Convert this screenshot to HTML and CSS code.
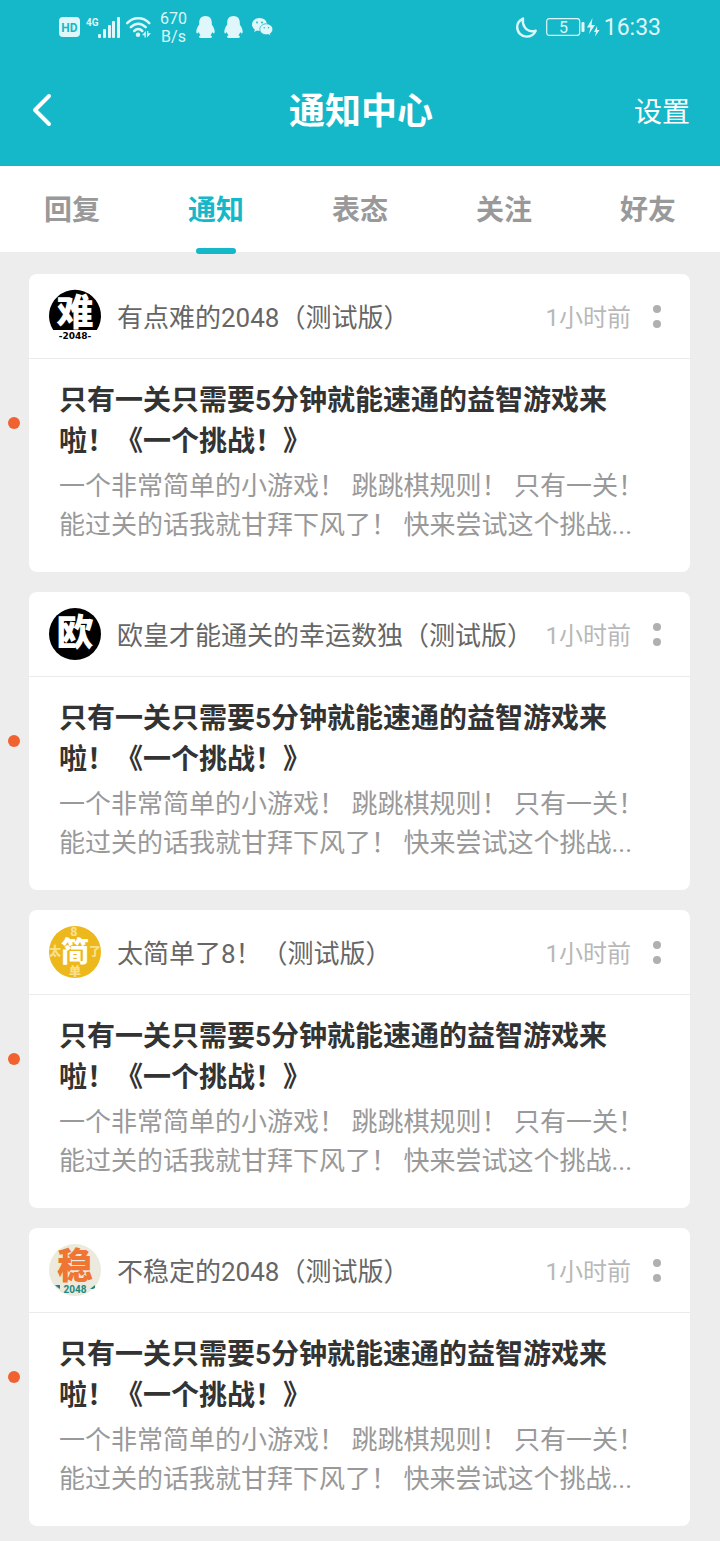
FILE: index.html
```html
<!DOCTYPE html>
<html lang="zh-CN">
<head>
    <meta charset="UTF-8">
    <meta name="viewport" content="width=device-width, initial-scale=1.0">
    <title>通知中心</title>
    <link rel="stylesheet" href="styles.css">
</head>
<body>

    <div class="status-bar">
        <div class="status-left">
            <div class="signal-group">
                <svg width="21" height="20" viewBox="0 0 21 20">
                    <rect width="21" height="20" rx="4" fill="#dff7fa"/>
                    <text class="hd-text" x="10.5" y="15" text-anchor="middle">HD</text>
                </svg>
                <svg width="34" height="22" viewBox="0 0 34 22" fill="#dff7fa">
                    <text class="net-text" x="0" y="10">4G</text>
                    <rect x="12" y="18" width="3" height="4" rx="1"/>
                    <rect x="17" y="13" width="3" height="9" rx="1"/>
                    <rect x="22" y="9" width="3" height="13" rx="1"/>
                    <rect x="26" y="5" width="3" height="17" rx="1"/>
                    <rect x="31" y="1" width="3" height="21" rx="1"/>
                </svg>
                <svg width="25" height="22" viewBox="0 0 25 22" fill="none" stroke="#dff7fa" stroke-width="2.5" stroke-linecap="round">
                    <path d="M1.2 7.2C7.5 .7 17 .7 23.3 7.2"/>
                    <path d="M4.8 11.2C9.5 6.6 15 6.6 19.7 11.2"/>
                    <path d="M8.2 15C10.8 12.4 13.7 12.4 16.3 15"/>
                    <circle cx="12" cy="18.8" r="2.2" fill="#dff7fa" stroke="none"/>
                    <path d="M19.800 15v6.500h-1.300v-2.300h-2.500zM21 21.500V15h1.300v2.300h2.700z" fill="#dff7fa" stroke="none"/>
                </svg>
            </div>
            <div class="net-speed">670<br>B/s</div>
            <svg width="19" height="22" viewBox="0 0 19 22" fill="#dff7fa">
                <path d="M9.500 0C5.500 0 3.200 2.800 3.200 6.500v2C2 10.500.3 13 .3 15.500c0 1.300.4 2 .9 2 .6 0 1.200-.8 1.600-1.500.3 1.300.9 2.400 1.700 3.200-1 .4-1.500.9-1.500 1.500 0 .8 1.100 1.300 3 1.300h7c1.900 0 3-.5 3-1.300 0-.6-.5-1.100-1.500-1.500.8-.8 1.400-1.900 1.700-3.200.4.700 1 1.500 1.600 1.500.5 0 .9-.7.9-2 0-2.500-1.700-5-2.900-7v-2C15.800 2.800 13.500 0 9.500 0z"/>
            </svg>
            <svg width="19" height="22" viewBox="0 0 19 22" fill="#dff7fa">
                <path d="M9.500 0C5.500 0 3.200 2.800 3.200 6.500v2C2 10.500.3 13 .3 15.500c0 1.300.4 2 .9 2 .6 0 1.200-.8 1.600-1.500.3 1.300.9 2.400 1.700 3.200-1 .4-1.500.9-1.500 1.500 0 .8 1.100 1.300 3 1.300h7c1.900 0 3-.5 3-1.300 0-.6-.5-1.100-1.500-1.500.8-.8 1.400-1.900 1.700-3.200.4.700 1 1.500 1.600 1.500.5 0 .9-.7.9-2 0-2.500-1.700-5-2.900-7v-2C15.800 2.800 13.500 0 9.500 0z"/>
            </svg>
            <svg width="21" height="18" viewBox="0 0 21 18">
                <path d="M7.500 0C3.300 0 0 2.800 0 6.400c0 2 1.100 3.800 2.800 5L2.200 14l2.700-1.500c.8.200 1.700.4 2.600.4 4.200 0 7.500-2.900 7.500-6.500S11.700 0 7.500 0z" fill="#dff7fa"/>
                <path d="M14.300 5.800c-3.700 0-6.500 2.500-6.500 5.500s2.800 5.500 6.500 5.500c.8 0 1.500-.1 2.200-.3l2.300 1.300-.5-2.200c1.500-1 2.500-2.600 2.500-4.300 0-3-2.800-5.500-6.500-5.500z" fill="#dff7fa" stroke="#15b8c8" stroke-width=".8"/>
                <g fill="#15b8c8">
                    <circle cx="5" cy="4.500" r=".9"/>
                    <circle cx="10" cy="4.500" r=".9"/>
                    <circle cx="12.200" cy="9.700" r=".7"/>
                    <circle cx="16.500" cy="9.700" r=".7"/>
                </g>
            </svg>
        </div>
        <div class="status-right">
            <svg class="moon" width="21" height="21" viewBox="0 0 21 21" fill="none" stroke="#dff7fa" stroke-width="2.400" stroke-linejoin="round">
                <path d="M7 1.500C3.500 3.200 1.200 6.300 1.200 10.200c0 5.300 4.200 9.400 9.300 9.400 4.100 0 7.600-2.300 9.200-5.900-1.400.5-2.700.7-4 .6C9.800 13.800 5.800 8 7 1.500z"/>
            </svg>
            <svg width="54" height="20" viewBox="0 0 54 20" fill="#dff7fa">
                <rect x=".7" y="1.700" width="33" height="16.600" rx="2.500" fill="none" stroke="#dff7fa" stroke-width="1.200"/>
                <text class="battery-text" x="17.500" y="15.500" text-anchor="middle">5</text>
                <rect x="35.500" y="5" width="3" height="10" rx="1"/>
                <path d="M46.500 1L41 10.500h3.500L43 17l6-9h-3.500zM51 9l-3 6h2l-1 4.500 4.500-6.500h-2.300z"/>
            </svg>
            <span class="clock">16:33</span>
        </div>
    </div>

    <header class="app-bar">
        <button class="back-button" type="button" aria-label="返回">
            <svg width="20" height="34" viewBox="0 0 20 34" fill="none" stroke="#fff" stroke-width="4" stroke-linecap="round" stroke-linejoin="round">
                <path d="M17 3L3 17l14 14"/>
            </svg>
        </button>
        <h1>通知中心</h1>
        <a href="#settings" class="settings-link">设置</a>
    </header>

    <nav class="tabs">
        <a href="#reply" class="tab">回复</a>
        <a href="#notice" class="tab active">通知</a>
        <a href="#react" class="tab">表态</a>
        <a href="#follow" class="tab">关注</a>
        <a href="#friend" class="tab">好友</a>
    </nav>

    <ul class="notice-list">
        <li class="notice">
            <span class="unread-dot"></span>
            <article class="card">
                <div class="card-header">
                    <svg class="avatar" viewBox="0 0 52 52">
                        <path d="M4.200 40A26 26 0 1 1 47.800 40z" fill="#000"/>
                        <text class="avatar-main" x="26" y="36" text-anchor="middle" font-size="37" fill="#fff">难</text>
                        <text class="avatar-wide" x="26" y="49" text-anchor="middle" font-size="9" fill="#000">-2048-</text>
                    </svg>
                    <span class="source">有点难的2048（测试版）</span>
                    <time class="time">1小时前</time>
                    <button class="more-button" type="button" aria-label="更多"></button>
                </div>
                <div class="card-body">
                    <h2>只有一关只需要5分钟就能速通的益智游戏来啦！《一个挑战！》</h2>
                    <p>一个非常简单的小游戏！ 跳跳棋规则！ 只有一关！能过关的话我就甘拜下风了！ 快来尝试这个挑战...</p>
                </div>
            </article>
        </li>

        <li class="notice">
            <span class="unread-dot"></span>
            <article class="card">
                <div class="card-header">
                    <svg class="avatar" viewBox="0 0 52 52">
                        <circle cx="26" cy="26" r="26" fill="#000"/>
                        <text class="avatar-main" x="26" y="38" text-anchor="middle" font-size="37" fill="#fff">欧</text>
                    </svg>
                    <span class="source">欧皇才能通关的幸运数独（测试版）</span>
                    <time class="time">1小时前</time>
                    <button class="more-button" type="button" aria-label="更多"></button>
                </div>
                <div class="card-body">
                    <h2>只有一关只需要5分钟就能速通的益智游戏来啦！《一个挑战！》</h2>
                    <p>一个非常简单的小游戏！ 跳跳棋规则！ 只有一关！能过关的话我就甘拜下风了！ 快来尝试这个挑战...</p>
                </div>
            </article>
        </li>

        <li class="notice">
            <span class="unread-dot"></span>
            <article class="card">
                <div class="card-header">
                    <svg class="avatar" viewBox="0 0 52 52">
                        <circle cx="26" cy="26" r="26" fill="#edb81c"/>
                        <g class="avatar-main" fill="#fbe08c" text-anchor="middle">
                            <text x="25" y="10" font-size="12">8</text>
                            <text x="6" y="30" font-size="12">太</text>
                            <text x="46" y="30" font-size="12">了</text>
                            <text x="26" y="50" font-size="12">单</text>
                        </g>
                        <text class="avatar-main" x="26" y="36" text-anchor="middle" font-size="28" fill="#fff">简</text>
                    </svg>
                    <span class="source">太简单了8！（测试版）</span>
                    <time class="time">1小时前</time>
                    <button class="more-button" type="button" aria-label="更多"></button>
                </div>
                <div class="card-body">
                    <h2>只有一关只需要5分钟就能速通的益智游戏来啦！《一个挑战！》</h2>
                    <p>一个非常简单的小游戏！ 跳跳棋规则！ 只有一关！能过关的话我就甘拜下风了！ 快来尝试这个挑战...</p>
                </div>
            </article>
        </li>

        <li class="notice">
            <span class="unread-dot"></span>
            <article class="card">
                <div class="card-header">
                    <svg class="avatar" viewBox="0 0 52 52">
                        <circle cx="26" cy="26" r="26" fill="#ebeadd"/>
                        <text class="avatar-main" x="26" y="35" text-anchor="middle" font-size="36" fill="#ee7632">稳</text>
                        <text class="avatar-narrow" x="26" y="49" text-anchor="middle" font-size="10" fill="#23877f">2048</text>
                        <path d="M6 41h5v4l-3-2zM41 45l5-4v3l-2 1z" fill="#23877f"/>
                    </svg>
                    <span class="source">不稳定的2048（测试版）</span>
                    <time class="time">1小时前</time>
                    <button class="more-button" type="button" aria-label="更多"></button>
                </div>
                <div class="card-body">
                    <h2>只有一关只需要5分钟就能速通的益智游戏来啦！《一个挑战！》</h2>
                    <p>一个非常简单的小游戏！ 跳跳棋规则！ 只有一关！能过关的话我就甘拜下风了！ 快来尝试这个挑战...</p>
                </div>
            </article>
        </li>
    </ul>

</body>
</html>
```

FILE: styles.css
```css
* {
    margin: 0;
    padding: 0;
    box-sizing: border-box;
}

body {
    font-family: Roboto, 'Noto Sans CJK SC', sans-serif;
    background: #ededed;
    color: #333;
    min-height: 100vh;
    text-spacing-trim: space-all;
}

a {
    text-decoration: none;
}

button {
    background: none;
    border: none;
    cursor: pointer;
}

svg {
    display: block;
    flex-shrink: 0;
    overflow: visible;
}


.status-bar {
    display: flex;
    justify-content: space-between;
    align-items: center;
    height: 54px;
    padding: 0 59px;
    background: #15b8c8;
    color: #dff7fa;
}

.status-left {
    display: flex;
    align-items: center;
    gap: 9px;
}

.signal-group {
    display: flex;
    align-items: center;
    gap: 6px;
}

.status-right {
    display: flex;
    align-items: center;
    gap: 4px;
}

.moon {
    margin-right: 5px;
}

.net-speed {
    padding-top: 2px;
    font-size: 16px;
    line-height: 18px;
    text-align: center;
}

.clock {
    padding-top: 2px;
    font-size: 23px;
    line-height: 28px;
}

.hd-text {
    font-size: 12px;
    font-weight: 700;
    fill: #15b8c8;
}

.net-text {
    font-family: Roboto, sans-serif;
    font-size: 10px;
    font-weight: 700;
}

.battery-text {
    font-size: 16px;
}


.app-bar {
    display: grid;
    grid-template-columns: 1fr auto 1fr;
    align-items: center;
    height: 112px;
    padding: 0 30px 0 32px;
    background: #15b8c8;
    color: #fff;
}

.app-bar h1 {
    padding-top: 4px;
    font-size: 36px;
    line-height: 52px;
}

.back-button {
    justify-self: start;
}

.settings-link {
    justify-self: end;
    padding-top: 6px;
    color: #fff;
    font-size: 28px;
    line-height: 40px;
}


.tabs {
    display: flex;
    height: 86px;
    background: #fff;
}

.tab {
    flex: 1;
    position: relative;
    padding-top: 4px;
    text-align: center;
    font-size: 28px;
    font-weight: 700;
    line-height: 82px;
    color: #999;
}

.tab.active {
    color: #15b8c8;
}

.tab.active::after {
    content: '';
    position: absolute;
    left: 50%;
    bottom: -2px;
    width: 40px;
    height: 6px;
    margin-left: -20px;
    border-radius: 3px;
    background: #15b8c8;
}


.notice-list {
    display: flex;
    flex-direction: column;
    gap: 20px;
    padding: 22px 30px 15px 8px;
    list-style: none;
}

.notice {
    display: flex;
    align-items: center;
    gap: 9px;
}

.unread-dot {
    flex-shrink: 0;
    width: 12px;
    height: 12px;
    border-radius: 50%;
    background: #f0622f;
}

.card {
    flex: 1;
    min-width: 0;
    background: #fff;
    border-radius: 8px;
}

.card-header {
    display: flex;
    align-items: center;
    height: 85px;
    padding: 0 20px;
    border-bottom: 1px solid #ebebeb;
}

.avatar {
    width: 52px;
    height: 52px;
    margin-right: 16px;
}

.avatar-main {
    font-family: 'Noto Sans CJK SC', sans-serif;
    font-weight: 900;
}

.avatar-wide {
    font-family: 'DejaVu Sans', sans-serif;
    font-weight: 700;
}

.avatar-narrow {
    font-family: 'Liberation Sans Narrow', Roboto, sans-serif;
    font-weight: 700;
}

.source {
    flex: 1;
    padding-top: 4px;
    font-size: 26px;
    line-height: 38px;
    color: #666;
    white-space: nowrap;
}

.time {
    padding-top: 4px;
    font-size: 24px;
    line-height: 36px;
    color: #b8b8b8;
    white-space: nowrap;
}

/* two stacked dots */
.more-button {
    display: flex;
    flex-direction: column;
    align-items: center;
    gap: 7px;
    width: 26px;
    margin-left: 13px;
}

.more-button::before,
.more-button::after {
    content: '';
    width: 8px;
    height: 8px;
    border-radius: 50%;
    background: #b0b0b0;
}

.card-body {
    padding: 21px 30px 27px;
}

.card-body h2 {
    font-size: 28px;
    line-height: 41px;
    margin-bottom: 5px;
}

.card-body p {
    font-size: 26px;
    line-height: 39px;
    color: #999;
}
```
